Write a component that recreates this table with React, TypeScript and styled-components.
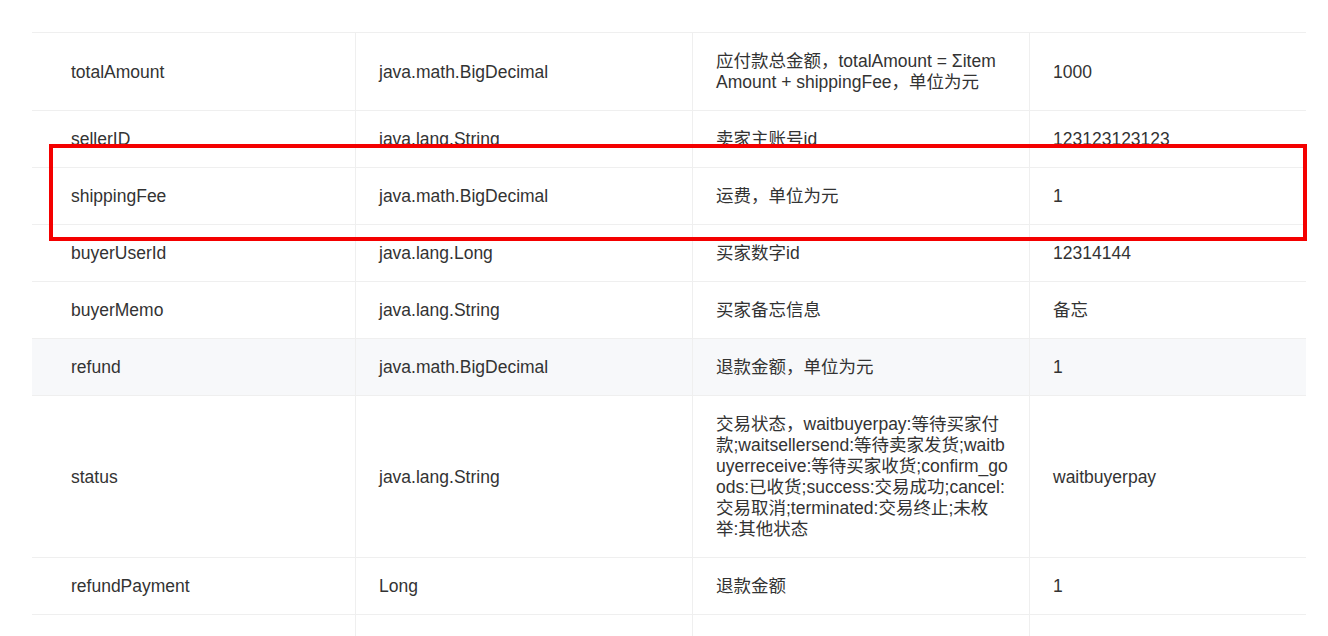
import React from "react";
import styled, { createGlobalStyle } from "styled-components";

const GlobalStyle = createGlobalStyle`
  html, body {
    margin: 0;
    padding: 0;
    background: #ffffff;
    overflow: hidden;
  }
  body {
    font-family: "Liberation Sans", "Noto Sans CJK SC", sans-serif;
    color: #333333;
  }
  * { box-sizing: border-box; }
`;

const Page = styled.div`
  width: 1328px;
  height: 636px;
  padding: 32px 0 0 32px;
  overflow: hidden;
`;

const Table = styled.div`
  position: relative;
  width: 1274px;
  border-top: 1px solid #efefef;
`;

const Row = styled.div<{ $shaded?: boolean }>`
  display: grid;
  grid-template-columns: 324px 337px 337px 1fr;
  border-bottom: 1px solid #efefef;
  background: ${(p) => (p.$shaded ? "#f7f8fa" : "transparent")};
`;

const Cell = styled.div<{ $first?: boolean; $last?: boolean; $wide?: boolean }>`
  display: flex;
  align-items: center;
  padding: 18px ${(p) => (p.$wide ? "16px" : "23px")} 17px
    ${(p) => (p.$first ? "39px" : "23px")};
  border-right: ${(p) => (p.$last ? "none" : "1px solid #efefef")};
  font-size: 17.5px;
  line-height: 21px;
  word-break: break-all;
  white-space: pre-line;
  min-width: 0;
`;

const Text = styled.span<{ $clipped?: boolean }>`
  display: block;
  ${(p) => (p.$clipped ? "clip-path: inset(0 0 6px 0);" : "")}
`;

const Highlight = styled.div`
  position: absolute;
  top: 111px;
  left: 17px;
  width: 1258px;
  height: 97px;
  border: 4px solid #f40000;
  pointer-events: none;
  z-index: 2;
`;

type Field = {
  name: string;
  type: string;
  desc: string;
  example: string;
  shaded?: boolean;
  clipped?: boolean;
};

const fields: Field[] = [
  {
    name: "totalAmount",
    type: "java.math.BigDecimal",
    desc: "应付款总金额，totalAmount = Σitem\nAmount + shippingFee，单位为元",
    example: "1000",
  },
  {
    name: "sellerID",
    type: "java.lang.String",
    desc: "卖家主账号id",
    example: "123123123123",
    clipped: true,
  },
  {
    name: "shippingFee",
    type: "java.math.BigDecimal",
    desc: "运费，单位为元",
    example: "1",
  },
  {
    name: "buyerUserId",
    type: "java.lang.Long",
    desc: "买家数字id",
    example: "12314144",
  },
  {
    name: "buyerMemo",
    type: "java.lang.String",
    desc: "买家备忘信息",
    example: "备忘",
  },
  {
    name: "refund",
    type: "java.math.BigDecimal",
    desc: "退款金额，单位为元",
    example: "1",
    shaded: true,
  },
  {
    name: "status",
    type: "java.lang.String",
    desc:
      "交易状态，waitbuyerpay:等待买家付\n款;waitsellersend:等待卖家发货;waitb\nuyerreceive:等待买家收货;confirm_go\nods:已收货;success:交易成功;cancel:\n交易取消;terminated:交易终止;未枚\n举:其他状态",
    example: "waitbuyerpay",
  },
  {
    name: "refundPayment",
    type: "Long",
    desc: "退款金额",
    example: "1",
  },
  {
    name: "\u00a0",
    type: "\u00a0",
    desc: "\u00a0",
    example: "\u00a0",
  },
];

export default function App() {
  return (
    <>
      <GlobalStyle />
      <Page>
        <Table>
          {fields.map((f, i) => (
            <Row key={i} $shaded={f.shaded}>
              <Cell $first>
                <Text $clipped={f.clipped}>{f.name}</Text>
              </Cell>
              <Cell>
                <Text $clipped={f.clipped}>{f.type}</Text>
              </Cell>
              <Cell $wide>
                <Text $clipped={f.clipped}>{f.desc}</Text>
              </Cell>
              <Cell $last>
                <Text $clipped={f.clipped}>{f.example}</Text>
              </Cell>
            </Row>
          ))}
          <Highlight />
        </Table>
      </Page>
    </>
  );
}
